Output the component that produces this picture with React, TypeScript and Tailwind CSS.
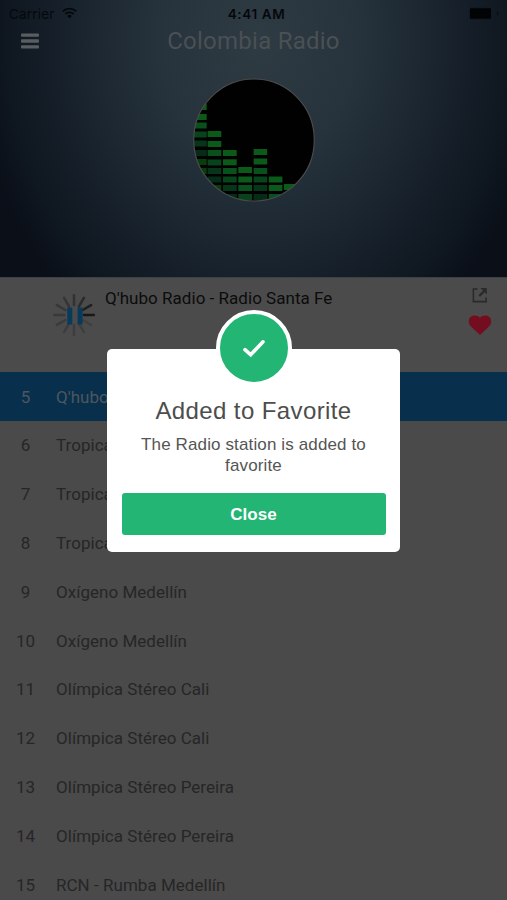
import React from 'react';

interface Station {
  id: number;
  name: string;
}

const STATIONS: Station[] = [
  { id: 5, name: "Q'hubo" },
  { id: 6, name: 'Tropica' },
  { id: 7, name: 'Tropica' },
  { id: 8, name: 'Tropica' },
  { id: 9, name: 'Oxígeno Medellín' },
  { id: 10, name: 'Oxígeno Medellín' },
  { id: 11, name: 'Olímpica Stéreo Cali' },
  { id: 12, name: 'Olímpica Stéreo Cali' },
  { id: 13, name: 'Olímpica Stéreo Pereira' },
  { id: 14, name: 'Olímpica Stéreo Pereira' },
  { id: 15, name: 'RCN - Rumba Medellín' },
];

// x, width and the top of every lit block, per equalizer column
const BARS = [
  { x: 0, w: 13.7, tops: [26, 36, 44.5, 53.5, 62.5, 72, 81, 90] },
  { x: 14.6, w: 13.7, tops: [53, 63, 72, 81.5, 90, 98.5, 107, 116] },
  { x: 30, w: 13.7, tops: [72, 81.3, 90, 98.5, 107, 116] },
  { x: 45.3, w: 13.7, tops: [89, 98.5, 107, 116] },
  { x: 60.6, w: 13.6, tops: [71, 80.5, 90, 98.5, 107, 116] },
  { x: 75.8, w: 13.6, tops: [98.5, 107, 116] },
  { x: 90.9, w: 13.6, tops: [106, 116] },
];

const BLOCK_COLORS = ['#0b5a19', '#0b5a19', '#09501c', '#07431b', '#06351a', '#062c18', '#063d0a', '#064006'];

const Equalizer: React.FC = () => (
  <svg width="122" height="124" viewBox="0 0 122 124">
    <defs>
      <clipPath id="disc">
        <ellipse cx="61" cy="62" rx="60.5" ry="61" />
      </clipPath>
    </defs>
    <g clipPath="url(#disc)">
      <rect width="122" height="124" fill="#010101" />
      {BARS.map((bar) =>
        bar.tops.map((top, i) => (
          <rect key={`${bar.x}-${top}`} x={bar.x} y={top} width={bar.w} height="6" fill={BLOCK_COLORS[i]} />
        ))
      )}
    </g>
    <ellipse cx="61" cy="62" rx="60.3" ry="61" fill="none" stroke="#4c4c4c" strokeWidth="1.2" />
  </svg>
);

// clockwise, starting at three o'clock
const SPOKES = ['#181818', '#404040', '#3f3f3f', '#3e3e3e', '#3d3d3d', '#3b3b3b', '#393939', '#373737', '#353535', '#323232', '#2b2b2b', '#1f1f1f'];

const Spinner: React.FC = () => (
  <svg width="44" height="44" viewBox="-22 -22 44 44">
    {SPOKES.map((color, i) => (
      <line
        key={i}
        x1="10"
        x2="19.8"
        y1="0"
        y2="0"
        stroke={color}
        strokeWidth="2.5"
        strokeLinecap="round"
        transform={`rotate(${i * 30})`}
      />
    ))}
    <rect x="-6.7" y="-7.5" width="5" height="17" fill="#083a5c" />
    <rect x="3.6" y="-7.5" width="5" height="17" fill="#083a5c" />
  </svg>
);

const StatusBar: React.FC = () => (
  <div className="grid h-7 grid-cols-3 items-center pr-2 pl-[9px] font-['Inter','Liberation_Sans',sans-serif] text-[13.5px] text-[#05080b]">
    <div className="flex items-center gap-[7px]">
      <span className="tracking-[0.2px]">Carrier</span>
      <svg className="-mt-0.5" width="15" height="12" viewBox="0 0 15 12" fill="none" stroke="#05080b" strokeWidth="1.8">
        <path d="M0.8 4.3a9.6 9.6 0 0 1 13.4 0" />
        <path d="M3.3 7a6 6 0 0 1 8.4 0" />
        <path d="M7.5 11.4 5.2 9a3.2 3.2 0 0 1 4.6 0z" fill="#05080b" stroke="none" />
      </svg>
    </div>
    <div className="pl-[5px] text-center font-semibold tracking-[0.6px] whitespace-nowrap">4:41 AM</div>
    <svg className="-mt-0.5 justify-self-end" width="30" height="13" viewBox="0 0 30 13">
      <rect x="0.5" y="0.5" width="26" height="12" rx="2" fill="none" stroke="#111922" />
      <rect x="1" y="1.3" width="21" height="10.4" rx="0.8" fill="#020304" />
      <path d="M28 4.5v4q1.4-.6 1.4-2t-1.4-2z" fill="#070c12" />
    </svg>
  </div>
);

const Header: React.FC = () => (
  <header className="h-[277px] bg-[radial-gradient(ellipse_285px_350px_at_51%_14%,#2e3b43_0%,#26333c_35%,#19232d_65%,#0f1720_88%,#0a0f18_100%)]">
    <StatusBar />
    <div className="grid h-[26px] grid-cols-[60px_1fr_60px] items-center">
      <svg className="-mt-px ml-[21px]" width="18" height="16" viewBox="0 0 18 16" fill="#5a5e61">
        <rect y="0.4" width="18" height="3.4" rx="1" />
        <rect y="6.3" width="18" height="3.4" rx="1" />
        <rect y="12.2" width="18" height="3.4" rx="1" />
      </svg>
      <h1 className="text-center text-[24px] leading-[26px] tracking-[0.25px] text-[#4a5053]">Colombia Radio</h1>
    </div>
    <div className="mt-6 flex justify-center">
      <Equalizer />
    </div>
  </header>
);

const NowPlaying: React.FC = () => (
  <section className="flex h-[95px] border-t border-[#3b4147] bg-[#4b4b4b]">
    <div className="mt-[15px] ml-[52px]">
      <Spinner />
    </div>
    <div className="mt-[10px] ml-[9px] flex-1 text-[17px] leading-5 tracking-[0.03px] text-[#0c0c0c]">
      Q'hubo Radio - Radio Santa Fe
    </div>
    <div className="mt-[9px] mr-[15px] flex flex-col items-center gap-[11px]">
      <svg width="16" height="17" viewBox="0 0 16 17" fill="none" stroke="#2a2a2a" strokeWidth="1.6">
        <path d="M5.5 2H1.4v12.6h12.7v-4.2" />
        <path d="M7.2 9 12 4.4" strokeWidth="2.4" />
        <path d="M8.4 1h6.4v6.4z" fill="#2a2a2a" stroke="none" />
      </svg>
      <svg width="24" height="20" viewBox="0 0 24 20" fill="#740d20">
        <path d="M12 20 3 11.6C1.4 10 .8 8.4.8 6.3.8 3.1 3.2.5 6.4.5 8.8.5 11 1.4 12 2.8 13 1.4 15.2.5 17.6.5c3.2 0 5.6 2.6 5.6 5.8 0 2.1-.6 3.7-2.2 5.3z" />
      </svg>
    </div>
  </section>
);

const StationList: React.FC = () => (
  <ul>
    {STATIONS.map((station) => (
      <li
        key={station.id}
        className={`grid h-[48.8px] grid-cols-[51px_1fr] items-center gap-[5px] pt-[2px] text-[17px] tracking-[0.03px] ${
          station.id === 5 ? 'bg-[#082f4b] text-[#4c5760]' : 'text-[#262626]'
        }`}
      >
        <span className="text-center">{station.id}</span>
        <span>{station.name}</span>
      </li>
    ))}
  </ul>
);

const FavoriteDialog: React.FC = () => (
  <div className="absolute top-[349px] left-[107px] flex h-[203px] w-[293px] flex-col items-center rounded-[5px] bg-white px-[15px] font-['Liberation_Sans',Arial,sans-serif]">
    <div className="-mt-[39px] flex size-[76px] shrink-0 items-center justify-center rounded-full border-[4px] border-white bg-[#22b573]">
      <svg width="24" height="20" viewBox="0 0 24 20" fill="none" stroke="#fff" strokeWidth="3.6" strokeLinecap="round">
        <path d="M3 11.6 8.7 16.8 21 3.8" />
      </svg>
    </div>
    <h2 className="mt-[9px] text-[24px] leading-8 tracking-[0.4px] whitespace-nowrap text-[#4d4d4d]">Added to Favorite</h2>
    <p className="mt-[7px] w-full text-center text-[17px] leading-[21px] tracking-[0.13px] text-[#555]">
      The Radio station is added to favorite
    </p>
    <button className="mt-[17px] h-[42px] w-[264px] shrink-0 rounded-[3px] bg-[#22b573] pt-[2px] text-[17px] font-bold text-white">
      Close
    </button>
  </div>
);

export default function App() {
  return (
    <div className="relative h-[900px] w-[507px] overflow-hidden bg-[#4a4a4a] font-['Roboto',sans-serif]">
      <Header />
      <NowPlaying />
      <StationList />
      <FavoriteDialog />
    </div>
  );
}
